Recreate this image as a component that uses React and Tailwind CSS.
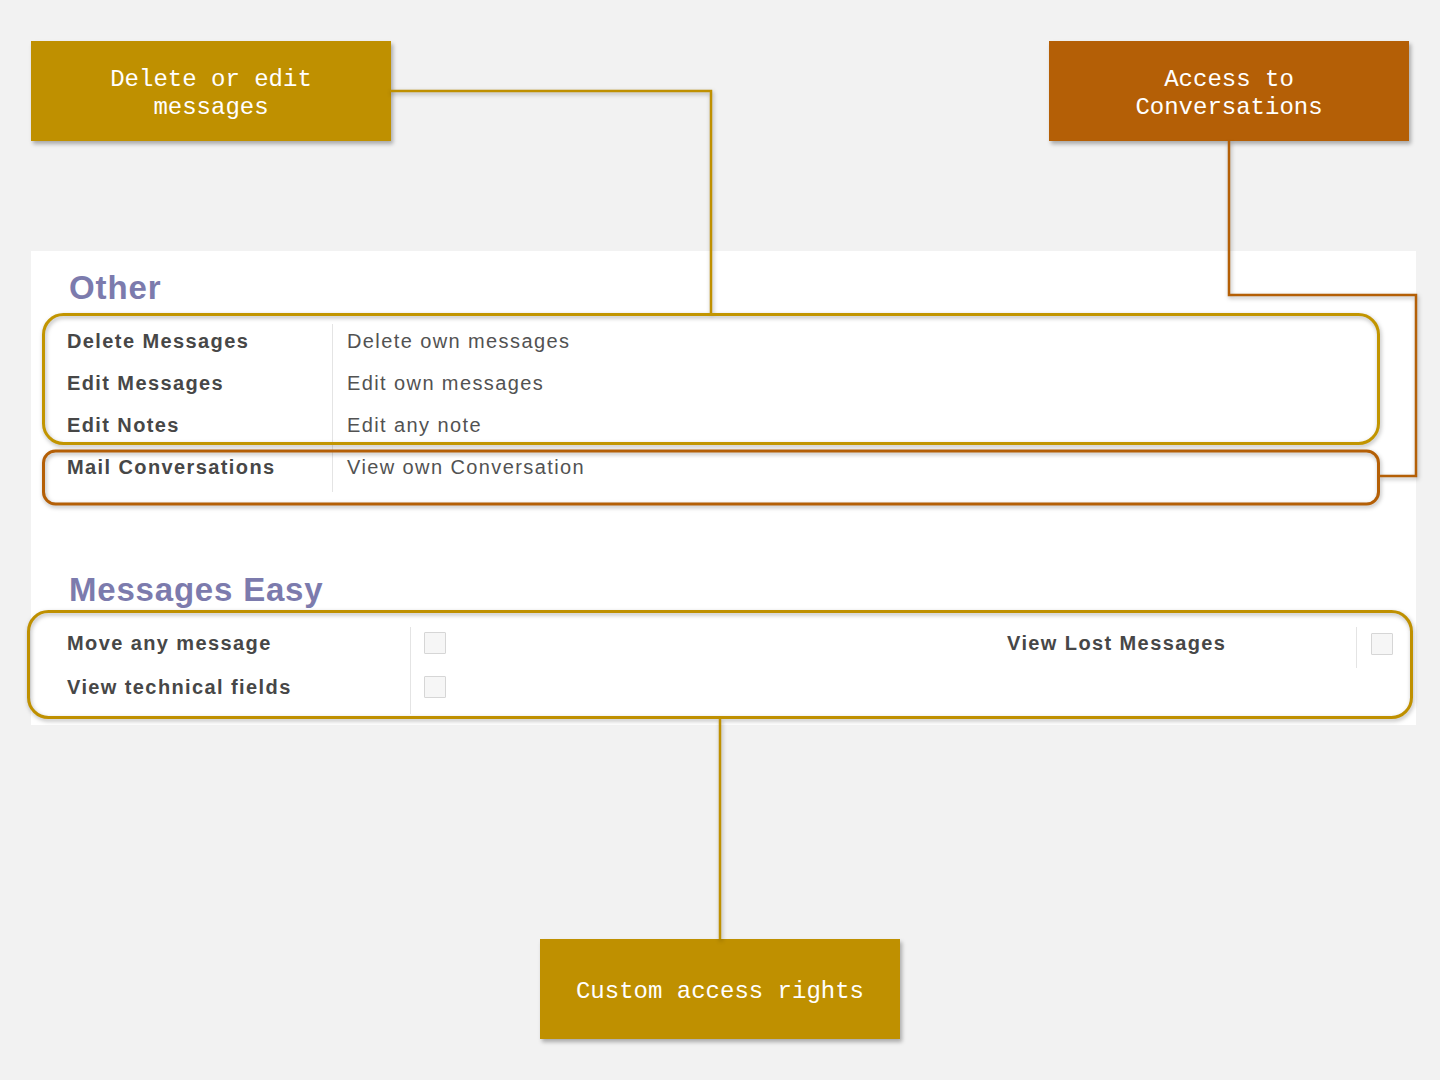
const mono = { fontFamily: '"Liberation Mono", "DejaVu Sans Mono", monospace' };

function Callout({ color, children }) {
    return (
        <div
            className={`w-[360px] h-[100px] pt-[5px] flex items-center justify-center text-center text-white text-[24px] leading-[28px] shadow-[2px_3px_4px_rgba(0,0,0,0.3)] ${color}`}
            style={mono}
        >
            <div>{children}</div>
        </div>
    );
}

function Checkbox() {
    return <div className="w-[22px] h-[22px] border border-[#d6d6d6] bg-[#f6f6f6] rounded-[1px]" />;
}

const otherRows = [
    ["Delete Messages", "Delete own messages"],
    ["Edit Messages", "Edit own messages"],
    ["Edit Notes", "Edit any note"],
    ["Mail Conversations", "View own Conversation"],
];

export default function App() {
    return (
        <div
            className="relative w-[1440px] h-[1080px] bg-[#f2f2f2] overflow-hidden"
            style={{ fontFamily: '"Liberation Sans", Arial, sans-serif' }}
        >
            {/* top callouts */}
            <div className="flex justify-between px-[31px] pt-[41px]">
                <Callout color="bg-[#bf9000]">Delete or edit<br />messages</Callout>
                <Callout color="bg-[#b45f06]">Access to<br />Conversations</Callout>
            </div>

            {/* settings panel */}
            <div className="ml-[31px] mt-[110px] w-[1385px] h-[474px] bg-white pl-[36px] pt-[17px]">
                <h2 className="ml-[2px] text-[33px] leading-[40px] font-bold text-[#7c7bad] tracking-[0.9px]">Other</h2>
                <div className="mt-[12px] flex text-[20px] tracking-[1.4px]">
                    <div className="w-[265px]">
                        {otherRows.map(([label], i) => (
                            <div key={label} className={`flex items-center font-bold text-[#474747] ${i === 3 ? "h-[42px] mb-[4px]" : "h-[42px]"}`}>
                                {label}
                            </div>
                        ))}
                    </div>
                    <div className="border-l border-[#e4e4e4] pl-[14px] mt-[4px]">
                        {otherRows.map(([label, value]) => (
                            <div key={label} className="h-[42px] -mt-[4px] mb-[4px] flex items-center text-[#525252]">
                                {value}
                            </div>
                        ))}
                    </div>
                </div>

                <h2 className="ml-[2px] mt-[78px] text-[33px] leading-[40px] font-bold text-[#7c7bad] tracking-[0.8px]">Messages Easy</h2>
                <div className="mt-[11px] flex text-[20px] tracking-[1.4px] font-bold text-[#474747]">
                    <div className="w-[940px] flex">
                        <div className="w-[343px]">
                            <div className="h-[44px] flex items-center">Move any message</div>
                            <div className="h-[44px] flex items-center">View technical fields</div>
                        </div>
                        <div className="border-l border-[#e4e4e4] pl-[13px] mt-[6px] pb-[5px]">
                            <div className="h-[44px] -mt-[6px] flex items-center"><Checkbox /></div>
                            <div className="h-[44px] flex items-center"><Checkbox /></div>
                        </div>
                    </div>
                    <div className="flex">
                        <div className="w-[349px] h-[44px] flex items-center">View Lost Messages</div>
                        <div className="h-[41px] mt-[6px] border-l border-[#e4e4e4] pl-[14px] flex items-start pt-[6px]">
                            <Checkbox />
                        </div>
                    </div>
                </div>
            </div>

            {/* bottom callout */}
            <div className="mt-[214px] flex justify-center">
                <div
                    className="w-[360px] h-[100px] pt-[5px] flex items-center justify-center text-white text-[24px] leading-[28px] bg-[#bf9000] shadow-[2px_3px_4px_rgba(0,0,0,0.3)]"
                    style={mono}
                >
                    Custom access rights
                </div>
            </div>

            {/* annotation overlay: connectors and highlight frames */}
            <svg
                className="absolute inset-0 pointer-events-none drop-shadow-[1px_2px_2px_rgba(0,0,0,0.3)]"
                width="1440"
                height="1080"
                fill="none"
            >
                <path d="M390 91 H711 V313" stroke="#bf9000" strokeWidth="2.5" />
                <path d="M720 718 V939" stroke="#bf9000" strokeWidth="2.5" />
                <path d="M1229 141 V295 H1416 V476 H1379" stroke="#b45f06" strokeWidth="2.5" />
                <rect x="43.5" y="314.5" width="1335" height="129" rx="20" stroke="#c29500" strokeWidth="3" />
                <rect x="43.5" y="451" width="1335" height="53" rx="12" stroke="#b45f06" strokeWidth="3" />
                <rect x="28.5" y="611.5" width="1383" height="106" rx="20" stroke="#bf9000" strokeWidth="3" />
            </svg>
        </div>
    );
}
